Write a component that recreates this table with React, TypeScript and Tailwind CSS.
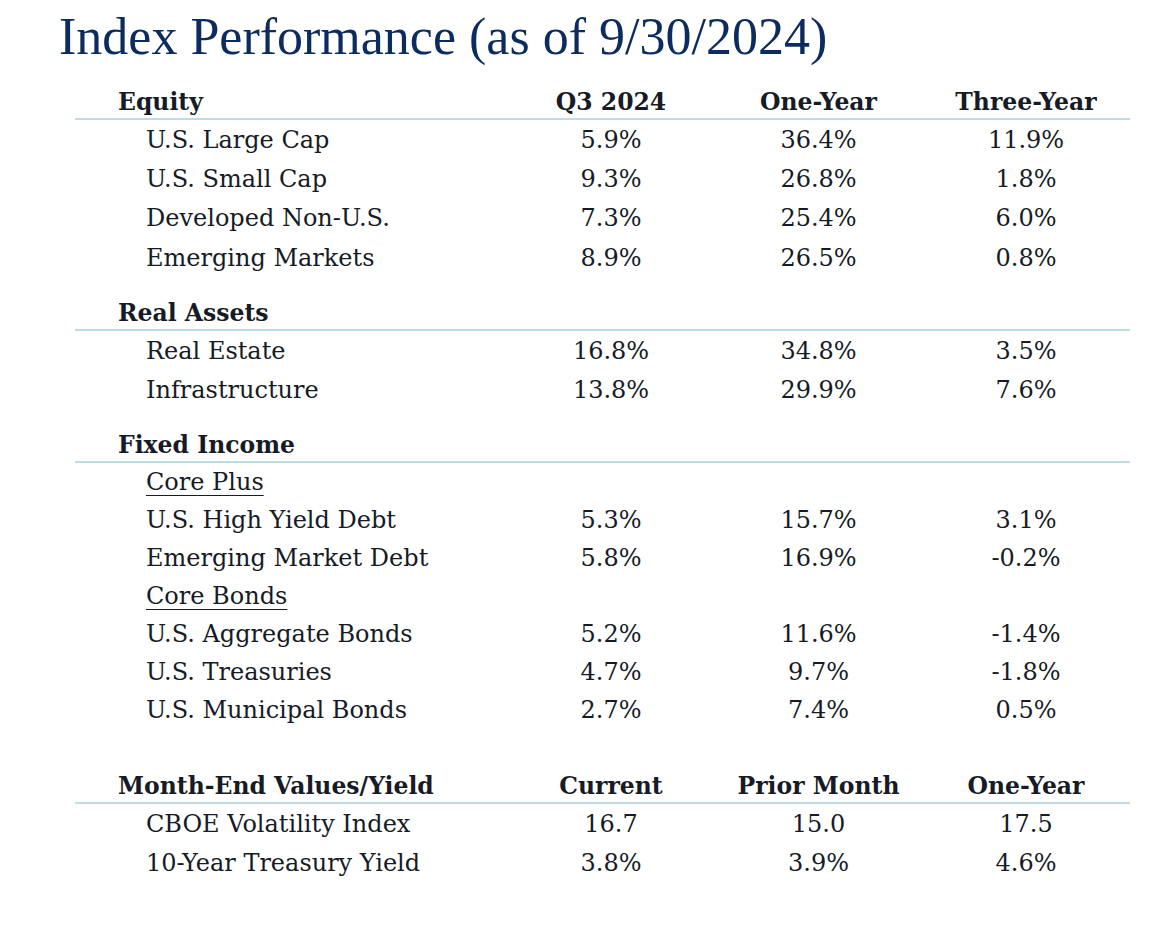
import React from 'react';

type Row = { label: string; values?: string[]; sub?: boolean };
type Section = { title: string; cols?: string[]; rows: Row[]; rowH: string; gap: string };

const sections: Section[] = [
  {
    title: 'Equity',
    cols: ['Q3 2024', 'One-Year', 'Three-Year'],
    gap: 'mt-0',
    rowH: 'h-[39.3px]',
    rows: [
      { label: 'U.S. Large Cap', values: ['5.9%', '36.4%', '11.9%'] },
      { label: 'U.S. Small Cap', values: ['9.3%', '26.8%', '1.8%'] },
      { label: 'Developed Non-U.S.', values: ['7.3%', '25.4%', '6.0%'] },
      { label: 'Emerging Markets', values: ['8.9%', '26.5%', '0.8%'] },
    ],
  },
  {
    title: 'Real Assets',
    gap: 'mt-[16px]',
    rowH: 'h-[39.5px]',
    rows: [
      { label: 'Real Estate', values: ['16.8%', '34.8%', '3.5%'] },
      { label: 'Infrastructure', values: ['13.8%', '29.9%', '7.6%'] },
    ],
  },
  {
    title: 'Fixed Income',
    gap: 'mt-[15px]',
    rowH: 'h-[38px]',
    rows: [
      { label: 'Core Plus', sub: true },
      { label: 'U.S. High Yield Debt', values: ['5.3%', '15.7%', '3.1%'] },
      { label: 'Emerging Market Debt', values: ['5.8%', '16.9%', '-0.2%'] },
      { label: 'Core Bonds', sub: true },
      { label: 'U.S. Aggregate Bonds', values: ['5.2%', '11.6%', '-1.4%'] },
      { label: 'U.S. Treasuries', values: ['4.7%', '9.7%', '-1.8%'] },
      { label: 'U.S. Municipal Bonds', values: ['2.7%', '7.4%', '0.5%'] },
    ],
  },
  {
    title: 'Month-End Values/Yield',
    cols: ['Current', 'Prior Month', 'One-Year'],
    gap: 'mt-[37px]',
    rowH: 'h-[39px]',
    rows: [
      { label: 'CBOE Volatility Index', values: ['16.7', '15.0', '17.5'] },
      { label: '10-Year Treasury Yield', values: ['3.8%', '3.9%', '4.6%'] },
    ],
  },
];

const grid = 'grid grid-cols-[432px_208px_207px_208px]';

export default function App() {
  return (
    <div className="w-[1175px] h-[934px] bg-white text-[#161b26] font-['DejaVu_Serif',serif]">
      <h1 className="pl-[59px] pt-[8px] h-[82px] text-[52px] leading-[58px] text-[#0c2b5e] font-['Liberation_Serif',serif]">
        Index Performance (as of 9/30/2024)
      </h1>

      <div className="ml-[75px] w-[1055px]">
        {sections.map((s) => (
          <div key={s.title} className={s.gap}>
            {/* section header */}
            <div className={`${grid} h-[38px] pt-[3px] items-center border-b-2 border-[#bcdde6] text-[23.5px] font-bold`}>
              <div className="pl-[43px]">{s.title}</div>
              {s.cols?.map((c) => (
                <div key={c} className="text-center">{c}</div>
              ))}
            </div>

            {s.rows.map((r) => (
              <div key={r.label} className={`${grid} ${s.rowH} items-center text-[24px]`}>
                <div className="pl-[71px]">
                  {r.sub ? <span className="underline underline-offset-[5px] decoration-1">{r.label}</span> : r.label}
                </div>
                {r.values?.map((v, i) => (
                  <div key={i} className="text-center">{v}</div>
                ))}
              </div>
            ))}
          </div>
        ))}
      </div>
    </div>
  );
}
